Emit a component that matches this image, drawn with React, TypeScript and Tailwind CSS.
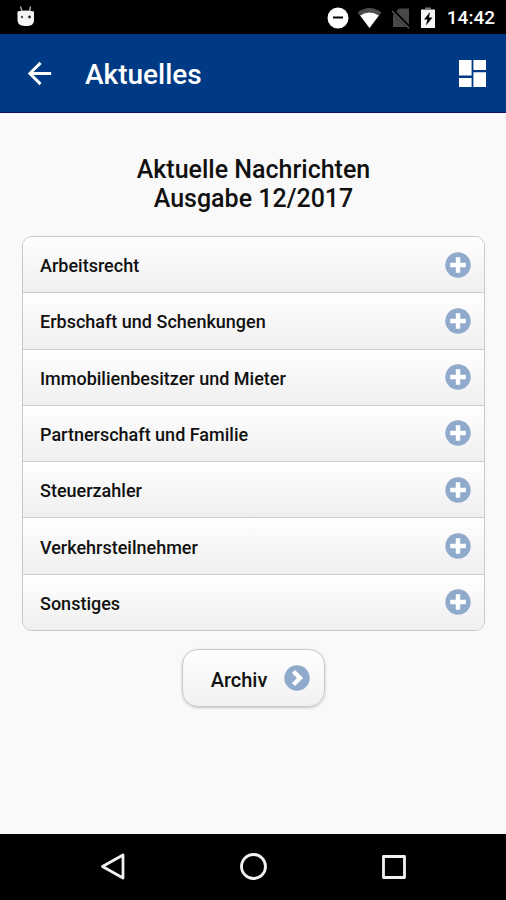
import { useState } from 'react';

const topics = [
  'Arbeitsrecht',
  'Erbschaft und Schenkungen',
  'Immobilienbesitzer und Mieter',
  'Partnerschaft und Familie',
  'Steuerzahler',
  'Verkehrsteilnehmer',
  'Sonstiges',
];

const StatusBar = () => (
  <div className="flex h-[34px] items-center bg-black pt-0.5 pl-4 pr-[11px] text-white">
    <svg width="20" height="22" viewBox="0 0 20 22" className="mb-1" aria-hidden="true">
      <path d="M4.500 1.500 6 6M14.500 1.500 13.500 6" stroke="#bbb" strokeWidth="1.300" fill="none" />
      <path d="M1.500 6.500Q10 4.500 18 6.500V15Q18 20 13 20.800Q10 21.200 7 20.800Q1.500 20 1.500 15Z" fill="#f4f4f4" />
      <circle cx="6" cy="12" r="1.200" fill="#555" />
      <circle cx="13.500" cy="12" r="1.400" fill="#222" />
    </svg>
    <div className="ml-auto flex items-center gap-2">
      <svg width="22" height="22" viewBox="0 0 22 22" aria-hidden="true">
        <circle cx="11" cy="11" r="10.500" fill="#fff" />
        <path d="M6 10.500h10" stroke="#000" strokeWidth="2" />
      </svg>
      <svg width="25" height="22" viewBox="0 0 25 22" aria-hidden="true">
        <path d="M0.500 5.500Q12.500 -3.500 24.500 5.500L12.500 21Z" fill="#4d4d4d" />
        <path d="M3.200 8.500Q12.500 2.500 21.800 8.500L12.500 21Z" fill="#fff" />
      </svg>
      <svg width="22" height="22" viewBox="0 0 22 22" aria-hidden="true">
        <path d="M9 1.500H19V20H3V8Z" fill="#484848" />
        <path d="M2.500 3.300 19.500 20.800" stroke="#000" strokeWidth="3.500" />
        <path d="M2 4 19 21.200" stroke="#555" strokeWidth="1.600" />
      </svg>
      <svg width="16" height="22" viewBox="3 0 16 22" aria-hidden="true">
        <path d="M4 2.500H18V21H4Z" fill="#f5f5f5" />
        <path d="M8 0.500H14V2.500H8Z" fill="#777" />
        <path d="M13 5 7 12.500H10.300L9 18.500 15.500 10.500H12Z" fill="#000" />
      </svg>
    </div>
    <span className="ml-[11px] text-[19px] font-medium leading-6">14:42</span>
  </div>
);

const Header = () => (
  <header className="flex h-[79px] items-center border-b border-[#10106a] bg-[#003a84] pl-[22px] pr-5 text-white">
    <button aria-label="Zurück" className="cursor-pointer">
      <svg width="35" height="35" viewBox="0 0 24 24" fill="currentColor">
        <path d="M20 11H7.830l5.590-5.590L12 4l-8 8 8 8 1.410-1.410L7.830 13H20v-2z" />
      </svg>
    </button>
    <h1 className="ml-7 pt-1 text-[28px] font-medium leading-8">Aktuelles</h1>
    <button aria-label="Übersicht" className="ml-auto cursor-pointer">
      <svg width="27" height="27" viewBox="0 0 27 27" fill="currentColor">
        <path d="M0 0h12.600v15.500H0zM0 18h12.600v9H0zM14.400 0H27v10H14.400zM14.400 12.300H27V27H14.400z" />
      </svg>
    </button>
  </header>
);

const PlusIcon = ({ open }: { open: boolean }) => (
  <svg width="26" height="26" viewBox="0 0 26 26" className="shrink-0" aria-hidden="true">
    <circle cx="13" cy="13" r="12.700" fill="#90aacb" />
    <path d={open ? 'M5.200 13h15.600' : 'M13 5.200v15.600M5.200 13h15.600'} stroke="#fff" strokeWidth="4.400" />
  </svg>
);

const NavBar = () => (
  <nav className="grid h-[66px] grid-cols-3 items-center bg-black px-[43px] text-[#f2f2f2]">
    <button aria-label="Back" className="cursor-pointer justify-self-center">
      <svg width="28" height="28" viewBox="0 0 28 28" fill="none" stroke="currentColor" strokeWidth="2.800" strokeLinejoin="round">
        <path d="M24 2V25L3.500 13.500Z" />
      </svg>
    </button>
    <button aria-label="Home" className="cursor-pointer justify-self-center">
      <svg width="28" height="28" viewBox="0 0 28 28" fill="none" stroke="currentColor" strokeWidth="2.800">
        <circle cx="14.500" cy="13.500" r="12" />
      </svg>
    </button>
    <button aria-label="Recent apps" className="cursor-pointer justify-self-center">
      <svg width="28" height="28" viewBox="0 0 28 28" fill="none" stroke="currentColor" strokeWidth="2.800" strokeLinejoin="round">
        <path d="M4.500 3.500h21v21h-21z" />
      </svg>
    </button>
  </nav>
);

const App = () => {
  const [open, setOpen] = useState<string | null>(null);

  return (
    <div className="flex min-h-screen flex-col bg-[#f9f9f9] font-[Roboto,sans-serif] text-[#111]">
      <StatusBar />
      <Header />

      <main className="flex flex-1 flex-col items-center pl-[22px] pr-[21px] pt-[42px]">
        <h2 className="text-center text-[25px] font-medium leading-[29px]">
          Aktuelle Nachrichten
          <br />
          Ausgabe 12/2017
        </h2>

        <ul className="mt-[23px] flex min-h-[395px] w-full flex-col overflow-hidden rounded-[10px] border border-[#c8c8c8]">
          {topics.map((topic) => (
            <li key={topic} className="flex flex-1 border-b border-[#ccc] last:border-b-0">
              <button
                onClick={() => setOpen(open === topic ? null : topic)}
                aria-expanded={open === topic}
                className="flex flex-1 cursor-pointer items-center justify-between bg-linear-to-b from-white to-[#efefef] pl-[17px] pr-[13px] text-left text-[18px] font-medium leading-6"
              >
                <span className="pt-[3px]">{topic}</span>
                <PlusIcon open={open === topic} />
              </button>
            </li>
          ))}
        </ul>

        <button className="mt-[18px] flex h-[58px] cursor-pointer items-center gap-[17px] rounded-[16px] border border-[#c8c8c8] bg-linear-to-b from-white to-[#f1f1f1] pl-7 pr-[14px] text-[20px] font-medium leading-6 shadow-[0_1px_3px_rgba(0,0,0,0.2)]">
          <span className="pt-[3px]">Archiv</span>
          <svg width="26" height="26" viewBox="0 0 26 26" aria-hidden="true">
            <circle cx="13" cy="13" r="12.700" fill="#90aacb" />
            <path d="M9.500 6.500 16 13 9.500 19.500" fill="none" stroke="#fff" strokeWidth="4.400" />
          </svg>
        </button>
      </main>

      <NavBar />
    </div>
  );
};

export default App;
